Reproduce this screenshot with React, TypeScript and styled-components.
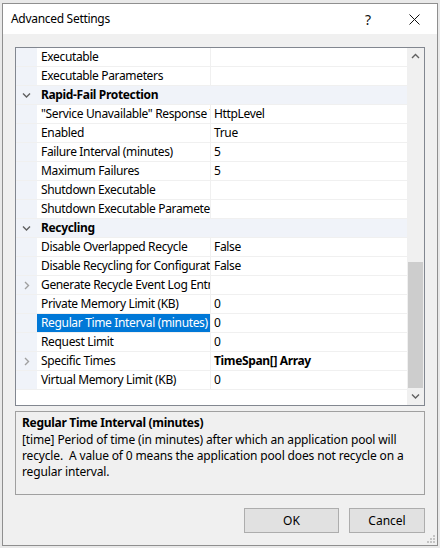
import React from "react";
import styled, { createGlobalStyle } from "styled-components";

const GlobalStyle = createGlobalStyle`
  html, body {
    margin: 0;
    padding: 0;
    background: #e9e9e9;
  }
  body {
    font-family: "Noto Sans", "Open Sans", sans-serif;
    font-size: 12px;
    color: #000;
  }
`;

type Row =
  | { kind: "category"; label: string }
  | {
      kind: "prop";
      name: string;
      value?: string;
      expandable?: boolean;
      bold?: boolean;
      selected?: boolean;
    };

const rows: Row[] = [
  { kind: "prop", name: "Executable" },
  { kind: "prop", name: "Executable Parameters" },
  { kind: "category", label: "Rapid-Fail Protection" },
  { kind: "prop", name: "\"Service Unavailable\" Response Type", value: "HttpLevel" },
  { kind: "prop", name: "Enabled", value: "True" },
  { kind: "prop", name: "Failure Interval (minutes)", value: "5" },
  { kind: "prop", name: "Maximum Failures", value: "5" },
  { kind: "prop", name: "Shutdown Executable" },
  { kind: "prop", name: "Shutdown Executable Parameters" },
  { kind: "category", label: "Recycling" },
  { kind: "prop", name: "Disable Overlapped Recycle", value: "False" },
  { kind: "prop", name: "Disable Recycling for Configuration Changes", value: "False" },
  { kind: "prop", name: "Generate Recycle Event Log Entry", expandable: true },
  { kind: "prop", name: "Private Memory Limit (KB)", value: "0" },
  { kind: "prop", name: "Regular Time Interval (minutes)", value: "0", selected: true },
  { kind: "prop", name: "Request Limit", value: "0" },
  { kind: "prop", name: "Specific Times", value: "TimeSpan[] Array", expandable: true, bold: true },
  { kind: "prop", name: "Virtual Memory Limit (KB)", value: "0" },
];

const Dialog = styled.div`
  margin: 3px 0 0 2px;
  width: 436px;
  height: 543px;
  box-sizing: border-box;
  border: 1px solid #8f8f8f;
  background: #f0f0f0;
  display: flex;
  flex-direction: column;
  position: relative;
`;

const TitleBar = styled.div`
  height: 30px;
  background: #fff;
  display: flex;
  align-items: center;
  padding-left: 8px;
`;

const Title = styled.div`
  flex: 1;
  font-size: 12px;
  letter-spacing: -0.3px;
  padding-bottom: 1px;
`;

const TitleButton = styled.div`
  width: 46px;
  height: 30px;
  display: flex;
  align-items: center;
  justify-content: center;
  font-size: 14px;
  color: #111;
`;

const Body = styled.div`
  flex: 1;
  display: flex;
  flex-direction: column;
  padding: 13px 12px 0 12px;
`;

const Grid = styled.div`
  height: 359px;
  box-sizing: border-box;
  border: 1px solid #828790;
  background: #fff;
  display: flex;
  letter-spacing: -0.35px;
`;

const RowList = styled.div`
  flex: 1;
  display: flex;
  flex-direction: column;
  overflow: hidden;
`;

const RowBox = styled.div<{ $category?: boolean }>`
  height: 19px;
  box-sizing: border-box;
  display: flex;
  border-bottom: 1px solid #f0f0f0;
  background: ${(p) => (p.$category ? "#f0f3f9" : "#fff")};
  flex-shrink: 0;
`;

const Gutter = styled.div`
  width: 21px;
  flex-shrink: 0;
  background: #f0f3f9;
  display: flex;
  align-items: center;
  justify-content: center;
`;

const NameCell = styled.div<{ $selected?: boolean }>`
  width: 174px;
  flex-shrink: 0;
  padding-left: 4px;
  box-sizing: border-box;
  white-space: nowrap;
  overflow: hidden;
  line-height: 18px;
  border-right: 1px solid #f0f0f0;
  background: ${(p) => (p.$selected ? "#0078d7" : "transparent")};
  color: ${(p) => (p.$selected ? "#fff" : "#000")};
`;

const ValueCell = styled.div<{ $bold?: boolean }>`
  flex: 1;
  padding-left: 3px;
  white-space: nowrap;
  overflow: hidden;
  line-height: 18px;
  font-weight: ${(p) => (p.$bold ? 700 : 400)};
`;

const CategoryLabel = styled.div`
  flex: 1;
  padding-left: 4px;
  font-weight: 700;
  line-height: 18px;
`;

const GridFill = styled.div`
  flex: 1;
  background: #fff;
`;

const ScrollBar = styled.div`
  width: 17px;
  background: #f0f0f0;
  display: flex;
  flex-direction: column;
  align-items: center;
`;

const ScrollArrow = styled.div`
  height: 17px;
  width: 17px;
  display: flex;
  align-items: center;
  justify-content: center;
`;

const ScrollTrack = styled.div`
  flex: 1;
  width: 100%;
  display: flex;
  flex-direction: column;
  justify-content: flex-end;
  align-items: center;
`;

const Thumb = styled.div`
  width: 15px;
  height: 126px;
  background: #cdcdcd;
`;

const Description = styled.div`
  margin-top: 5px;
  height: 84px;
  box-sizing: border-box;
  border: 1px solid #a0a0a0;
  padding: 3px 6px;
  line-height: 16px;
  letter-spacing: -0.15px;
`;

const DescTitle = styled.div`
  font-weight: 700;
  letter-spacing: -0.3px;
  margin-bottom: 1px;
`;

const ButtonRow = styled.div`
  display: flex;
  justify-content: flex-end;
  gap: 10px;
  margin-top: 13px;
`;

const Button = styled.button<{ $width: number }>`
  width: ${(p) => p.$width}px;
  height: 25px;
  box-sizing: border-box;
  border: 1px solid #adadad;
  background: #e1e1e1;
  font-family: inherit;
  font-size: 12px;
  color: #000;
  padding: 0;
`;

const Grip = styled.svg`
  position: absolute;
  right: 2px;
  bottom: 2px;
`;

const Chevron = ({ dir, color }: { dir: "down" | "right" | "up"; color: string }) => {
  const d =
    dir === "down" ? "M1 2.5 L4.5 6 L8 2.5" : dir === "up" ? "M1 6 L4.5 2.5 L8 6" : "M3 1 L6.5 4.5 L3 8";
  return (
    <svg width="9" height="9" viewBox="0 0 9 9">
      <path d={d} fill="none" stroke={color} strokeWidth="1.4" />
    </svg>
  );
};

export default function App() {
  return (
    <>
      <GlobalStyle />
      <Dialog>
        <TitleBar>
          <Title>Advanced Settings</Title>
          <TitleButton>?</TitleButton>
          <TitleButton>
            <svg width="11" height="11" viewBox="0 0 11 11">
              <path d="M0.5 0.5 L10.5 10.5 M10.5 0.5 L0.5 10.5" stroke="#111" strokeWidth="1" />
            </svg>
          </TitleButton>
        </TitleBar>
        <Body>
          <Grid>
            <RowList>
              {rows.map((r, i) =>
                r.kind === "category" ? (
                  <RowBox key={i} $category>
                    <Gutter>
                      <Chevron dir="down" color="#606060" />
                    </Gutter>
                    <CategoryLabel>{r.label}</CategoryLabel>
                  </RowBox>
                ) : (
                  <RowBox key={i}>
                    <Gutter>{r.expandable && <Chevron dir="right" color="#a0a0a0" />}</Gutter>
                    <NameCell $selected={r.selected}>{r.name}</NameCell>
                    <ValueCell $bold={r.bold}>{r.value}</ValueCell>
                  </RowBox>
                )
              )}
              <GridFill />
            </RowList>
            <ScrollBar>
              <ScrollArrow>
                <Chevron dir="up" color="#606060" />
              </ScrollArrow>
              <ScrollTrack>
                <Thumb />
              </ScrollTrack>
              <ScrollArrow>
                <Chevron dir="down" color="#606060" />
              </ScrollArrow>
            </ScrollBar>
          </Grid>
          <Description>
            <DescTitle>Regular Time Interval (minutes)</DescTitle>
            [time] Period of time (in minutes) after which an application pool will recycle.&nbsp; A value of 0
            means the application pool does not recycle on a regular interval.
          </Description>
          <ButtonRow>
            <Button $width={95}>OK</Button>
            <Button $width={76}>Cancel</Button>
          </ButtonRow>
        </Body>
        <Grip width="8" height="8" viewBox="0 0 8 8">
          {[
            [6, 0],
            [3, 3],
            [6, 3],
            [0, 6],
            [3, 6],
            [6, 6],
          ].map(([x, y], i) => (
            <rect key={i} x={x} y={y} width="2" height="2" fill="#c4c4c4" />
          ))}
        </Grip>
      </Dialog>
    </>
  );
}
